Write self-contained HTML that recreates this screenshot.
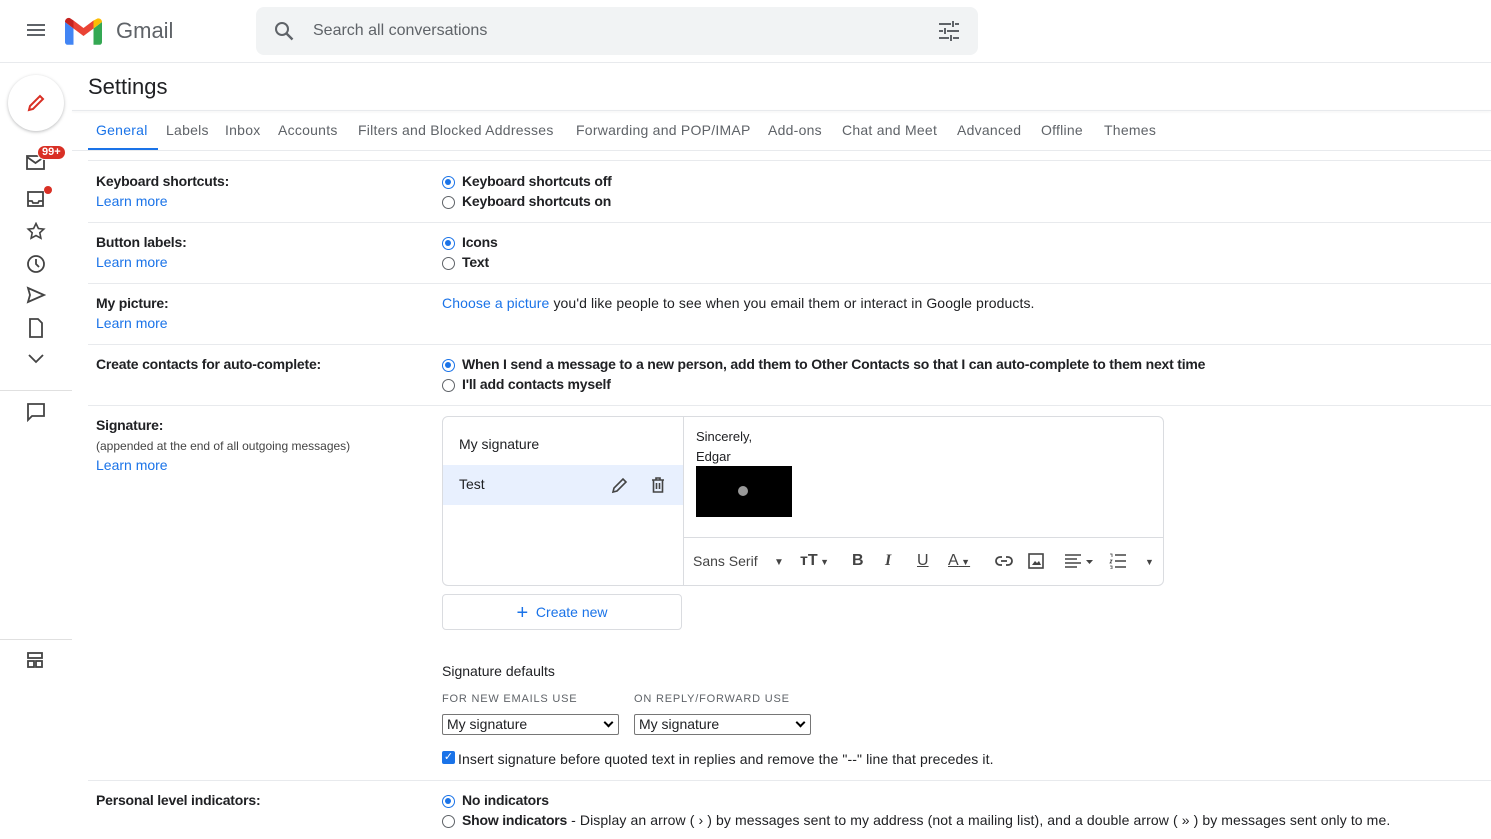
<!DOCTYPE html>
<html><head><style>
*{margin:0;padding:0;box-sizing:border-box}
body{width:1491px;height:839px;overflow:hidden;background:#fff;font-family:"Liberation Sans",Arial,sans-serif;color:#202124;position:relative;font-size:14px}
.a{position:absolute}
.b{font-weight:bold;font-size:14px;letter-spacing:-0.2px}
.l{color:#1a73e8;font-size:14px}
.hr{position:absolute;height:1px;background:#e8eaed;left:88px;right:0}
.r{position:absolute;width:13px;height:13px;border:1px solid #5f6368;border-radius:50%}
.r.on{border:1.5px solid #1a73e8}
.r.on::after{content:"";position:absolute;left:2px;top:2px;width:6px;height:6px;border-radius:50%;background:#1a73e8}
.tab{position:absolute;top:122px;font-size:14px;color:#5f6368;letter-spacing:0.25px}
.ic{position:absolute;left:26px}
.sel{position:absolute;height:21px;border:1px solid #767676;border-radius:2px;font-size:14px;padding:1px 4px;width:177px}
.sel::after{content:"";position:absolute;right:6px;top:4px;width:5px;height:5px;border-right:2px solid #000;border-bottom:2px solid #000;transform:rotate(45deg)}
.tb{position:absolute;top:552px;font-size:16px;color:#444}
</style></head><body>
<div class="a" style="left:27px;top:24px;width:18px;height:2px;background:#5f6368;box-shadow:0 5px 0 #5f6368,0 10px 0 #5f6368"></div>
<svg class="a" style="left:65px;top:17px" width="37" height="28" viewBox="0 0 37 28"><path d="M0 5v20c0 1.7 1.2 2.8 2.6 2.8H8.5V11.5z" fill="#4285f4"/><path d="M28.5 11.5v16.3h6c1.4 0 2.5-1.1 2.5-2.8V5z" fill="#34a853"/><path d="M28.5 3.5v8L37 5c0-3-3.5-4.5-5.5-3z" fill="#fbbc04"/><path d="M8.5 11.5v-8l10 7.5 10-7.5v8l-10 7.5z" fill="#ea4335"/><path d="M0 5v0l8.5 6.5v-8L5.5 1.5C3.5 0 0 1.5 0 5z" fill="#c5221f"/></svg>
<div class="a" style="left:116px;top:18px;font-size:22px;color:#5f6368">Gmail</div>
<div class="a" style="left:256px;top:7px;width:722px;height:48px;background:#f1f3f4;border-radius:8px"></div>
<svg class="a" style="left:274px;top:21px" width="20" height="20" viewBox="0 0 20 20"><circle cx="8" cy="8" r="6" fill="none" stroke="#5f6368" stroke-width="2"/><path d="M12.5 12.5l6 6" stroke="#5f6368" stroke-width="2.4"/></svg>
<div class="a" style="left:313px;top:22px;font-size:16px;color:#5f6368">Search all conversations</div>
<svg class="a" style="left:938px;top:21px" width="22" height="20" viewBox="0 0 22 20"><g stroke="#5f6368" stroke-width="2"><path d="M1 3h12M17 3h4M1 10h4M9 10h12M1 17h10M15 17h6M15 0v6M7 7v6M13 14v6"/></g></svg>
<div class="a" style="left:0;top:62px;width:1491px;height:1px;background:#e8eaed"></div>
<div class="a" style="left:8px;top:75px;width:56px;height:56px;border-radius:50%;background:#fff;box-shadow:0 1px 3px rgba(60,64,67,.35)"></div>
<svg class="a" style="left:26px;top:93px" width="20" height="20" viewBox="0 0 20 20"><path d="M3 17l1-4L14 3l3 3L7 16z" fill="none" stroke="#d93025" stroke-width="2"/></svg>
<svg class="ic" style="top:155px" width="20" height="16" viewBox="0 0 20 16"><rect x="1" y="1" width="17" height="13" fill="none" stroke="#444" stroke-width="1.8"/><path d="M1 2l8.5 6L18 2" fill="none" stroke="#444" stroke-width="1.8"/></svg>
<div class="a" style="left:37px;top:145px;background:#d93025;color:#fff;font-size:11px;font-weight:bold;border-radius:8px;padding:0 4px;border:1px solid #fff;height:15px;line-height:13px">99+</div>
<svg class="ic" style="top:190px" width="20" height="18" viewBox="0 0 20 18"><rect x="2" y="2" width="15" height="14" fill="none" stroke="#444" stroke-width="1.8"/><path d="M2 11h4l1 2h5l1-2h4" fill="none" stroke="#444" stroke-width="1.8"/></svg>
<div class="a" style="left:44px;top:186px;width:8px;height:8px;border-radius:50%;background:#d93025"></div>
<svg class="ic" style="top:222px" width="20" height="18" viewBox="0 0 20 18"><path d="M10 1.5l2.4 5 5.4.6-4 3.7 1.1 5.4L10 13.5l-4.9 2.7 1.1-5.4-4-3.7 5.4-.6z" fill="none" stroke="#444" stroke-width="1.6"/></svg>
<svg class="ic" style="top:254px" width="20" height="20"><circle cx="10" cy="10" r="8" fill="none" stroke="#444" stroke-width="1.8"/><path d="M10 5v5l3 3" fill="none" stroke="#444" stroke-width="1.8"/></svg>
<svg class="ic" style="top:286px" width="20" height="18"><path d="M2 2l16 7-16 7 2-7z" fill="none" stroke="#444" stroke-width="1.8"/></svg>
<svg class="ic" style="top:318px" width="20" height="20"><path d="M4 1h8l4 4v14H4z" fill="none" stroke="#444" stroke-width="1.8"/></svg>
<svg class="ic" style="top:352px" width="20" height="14"><path d="M3 3l7 7 7-7" fill="none" stroke="#444" stroke-width="1.8"/></svg>
<div class="a" style="left:0;top:390px;width:72px;height:1px;background:#e0e0e0"></div>
<svg class="ic" style="top:402px" width="20" height="20"><path d="M2 2h16v12H6l-4 4z" fill="none" stroke="#444" stroke-width="1.8"/></svg>
<div class="a" style="left:0;top:639px;width:72px;height:1px;background:#e0e0e0"></div>
<svg class="ic" style="top:651px" width="20" height="18"><rect x="2" y="2" width="14" height="5" fill="none" stroke="#444" stroke-width="1.8"/><rect x="2" y="10" width="6" height="6" fill="none" stroke="#444" stroke-width="1.8"/><rect x="10" y="10" width="6" height="6" fill="none" stroke="#444" stroke-width="1.8"/></svg>
<div class="a" style="left:88px;top:74px;font-size:22px">Settings</div>
<div class="a" style="left:72px;top:110px;right:0;height:1px;background:#e8eaed;box-shadow:0 1px 2px rgba(0,0,0,.08)"></div>
<div class="tab" style="left:96px;color:#1a73e8">General</div>
<div class="tab" style="left:166px">Labels</div>
<div class="tab" style="left:225px">Inbox</div>
<div class="tab" style="left:278px">Accounts</div>
<div class="tab" style="left:358px">Filters and Blocked Addresses</div>
<div class="tab" style="left:576px">Forwarding and POP/IMAP</div>
<div class="tab" style="left:768px">Add-ons</div>
<div class="tab" style="left:842px">Chat and Meet</div>
<div class="tab" style="left:957px">Advanced</div>
<div class="tab" style="left:1041px">Offline</div>
<div class="tab" style="left:1104px">Themes</div>
<div class="a" style="left:88px;top:148px;width:70px;height:3px;background:#1a73e8"></div>
<div class="a" style="left:72px;top:150px;right:0;height:1px;background:#e8eaed"></div>
<div class="hr" style="top:160px"></div>

<div class="a b" style="left:96px;top:173px">Keyboard shortcuts:</div>
<div class="a l" style="left:96px;top:193px">Learn more</div>
<div class="r on" style="left:442px;top:176px"></div><div class="a b" style="left:462px;top:173px">Keyboard shortcuts off</div>
<div class="r" style="left:442px;top:196px"></div><div class="a b" style="left:462px;top:193px">Keyboard shortcuts on</div>
<div class="hr" style="top:222px"></div>

<div class="a b" style="left:96px;top:234px">Button labels:</div>
<div class="a l" style="left:96px;top:254px">Learn more</div>
<div class="r on" style="left:442px;top:237px"></div><div class="a b" style="left:462px;top:234px">Icons</div>
<div class="r" style="left:442px;top:257px"></div><div class="a b" style="left:462px;top:254px">Text</div>
<div class="hr" style="top:283px"></div>

<div class="a b" style="left:96px;top:295px">My picture:</div>
<div class="a l" style="left:96px;top:315px">Learn more</div>
<div class="a" style="left:442px;top:295px;letter-spacing:0.1px"><span style="color:#1a73e8">Choose a picture</span> you'd like people to see when you email them or interact in Google products.</div>
<div class="hr" style="top:344px"></div>

<div class="a b" style="left:96px;top:356px">Create contacts for auto-complete:</div>
<div class="r on" style="left:442px;top:359px"></div><div class="a b" style="left:462px;top:356px">When I send a message to a new person, add them to Other Contacts so that I can auto-complete to them next time</div>
<div class="r" style="left:442px;top:379px"></div><div class="a b" style="left:462px;top:376px">I'll add contacts myself</div>
<div class="hr" style="top:405px"></div>

<div class="a b" style="left:96px;top:417px">Signature:</div>
<div class="a" style="left:96px;top:439px;font-size:12px;color:#444">(appended at the end of all outgoing messages)</div>
<div class="a l" style="left:96px;top:457px">Learn more</div>
<div class="a" style="left:442px;top:416px;width:722px;height:170px;border:1px solid #dadce0;border-radius:6px"></div>
<div class="a" style="left:683px;top:417px;width:1px;height:168px;background:#dadce0"></div>
<div class="a" style="left:443px;top:465px;width:240px;height:40px;background:#e8f0fe"></div>
<div class="a" style="left:459px;top:436px">My signature</div>
<div class="a" style="left:459px;top:476px">Test</div>
<svg class="a" style="left:611px;top:476px" width="18" height="18"><path d="M2 16l1-4 9-9 3 3-9 9z" fill="none" stroke="#444" stroke-width="1.6"/></svg>
<svg class="a" style="left:650px;top:476px" width="16" height="18"><path d="M2 4h12M6 4V2h4v2M3.5 4v12h9V4M6.5 7v6M9.5 7v6" fill="none" stroke="#444" stroke-width="1.6"/></svg>
<div class="a" style="left:696px;top:429px;font-size:13px">Sincerely,</div>
<div class="a" style="left:696px;top:449px;font-size:13px">Edgar</div>
<div class="a" style="left:696px;top:466px;width:96px;height:51px;background:#000"></div>
<div class="a" style="left:738px;top:486px;width:10px;height:10px;border-radius:50%;background:#999"></div>
<div class="a" style="left:684px;top:537px;width:479px;height:1px;background:#dadce0"></div>
<div class="tb" style="left:693px;font-size:14px;top:553px">Sans Serif</div>
<div class="tb" style="left:774px;font-size:10px;top:557px">▼</div>
<div class="tb" style="left:800px;font-weight:bold">тT<span style="font-size:9px"> ▼</span></div>
<div class="tb" style="left:852px;font-weight:bold">B</div>
<div class="tb" style="left:885px;font-style:italic;font-family:'Liberation Serif';font-weight:bold">I</div>
<div class="tb" style="left:917px;text-decoration:underline">U</div>
<div class="tb" style="left:948px;text-decoration:underline">A<span style="font-size:9px;text-decoration:none"> ▼</span></div>
<svg class="a" style="left:995px;top:554px" width="18" height="14"><path d="M7 3H5a4 4 0 0 0 0 8h2M11 3h2a4 4 0 0 1 0 8h-2M6 7h6" fill="none" stroke="#444" stroke-width="1.8"/></svg>
<svg class="a" style="left:1028px;top:553px" width="16" height="16"><rect x="1" y="1" width="14" height="14" fill="none" stroke="#444" stroke-width="1.6"/><path d="M4 12l3-4 2 2 2-2 2 4z" fill="#444"/></svg>
<svg class="a" style="left:1064px;top:553px" width="34" height="16"><path d="M1 2h16M1 6h12M1 10h16M1 14h12" stroke="#444" stroke-width="1.6"/><path d="M22 7h7l-3.5 4z" fill="#444"/></svg>
<svg class="a" style="left:1109px;top:553px" width="18" height="16"><path d="M6 2h11M6 8h11M6 14h11" stroke="#444" stroke-width="1.6"/><path d="M1 1h2v3M1 7h2l-2 3h2M1 13h2v3H1" stroke="#444" stroke-width="0.8" fill="none"/></svg>
<div class="tb" style="left:1145px;font-size:9px;top:557px">▼</div>
<div class="a" style="left:442px;top:594px;width:240px;height:36px;border:1px solid #dadce0;border-radius:4px;color:#1a73e8;text-align:center;line-height:34px"><span style="font-size:20px;vertical-align:-2px">+</span>&nbsp; Create new</div>

<div class="a" style="left:442px;top:663px">Signature defaults</div>
<div class="a" style="left:442px;top:693px;font-size:11px;color:#5f6368;letter-spacing:.8px">FOR NEW EMAILS USE</div>
<div class="a" style="left:634px;top:693px;font-size:11px;color:#5f6368;letter-spacing:.8px">ON REPLY/FORWARD USE</div>
<div class="sel" style="left:442px;top:714px">My signature</div>
<div class="sel" style="left:634px;top:714px">My signature</div>
<div class="a" style="left:442px;top:751px;width:13px;height:13px;background:#1a73e8;border-radius:2px;color:#fff;font-size:11px;line-height:13px;text-align:center">✓</div>
<div class="a" style="left:458px;top:751px;letter-spacing:0.1px">Insert signature before quoted text in replies and remove the "--" line that precedes it.</div>
<div class="hr" style="top:780px"></div>

<div class="a b" style="left:96px;top:792px">Personal level indicators:</div>
<div class="r on" style="left:442px;top:795px"></div><div class="a b" style="left:462px;top:792px">No indicators</div>
<div class="r" style="left:442px;top:815px"></div><div class="a" style="left:462px;top:812px;letter-spacing:0.1px"><b style="letter-spacing:-0.2px">Show indicators</b> - Display an arrow ( › ) by messages sent to my address (not a mailing list), and a double arrow ( » ) by messages sent only to me.</div>
</body></html>
